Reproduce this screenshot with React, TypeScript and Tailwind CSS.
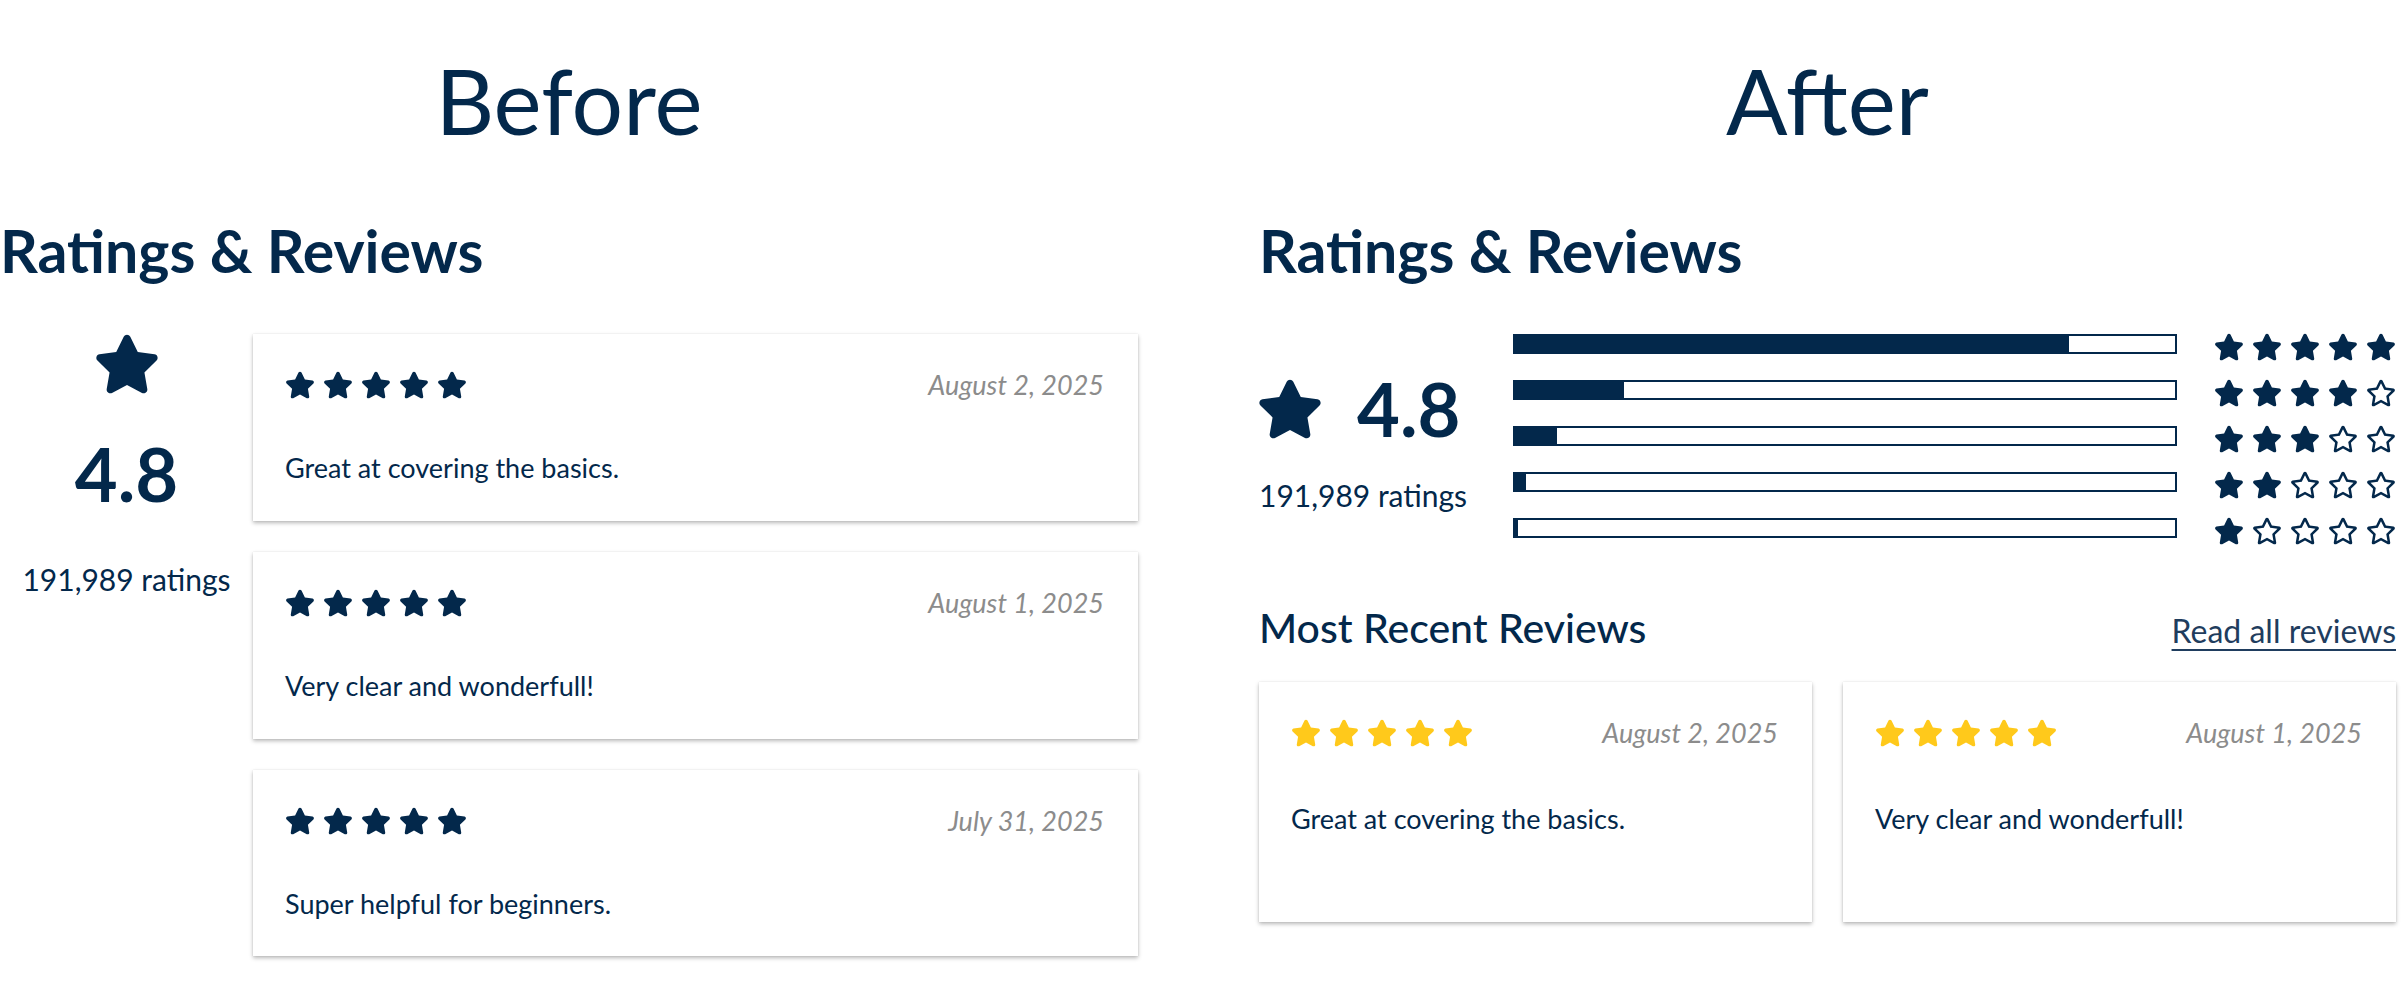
import { FaStar, FaRegStar } from 'react-icons/fa';

interface Review {
  date: string;
  text: string;
}

const beforeReviews: Review[] = [
  { date: 'August 2, 2025', text: 'Great at covering the basics.' },
  { date: 'August 1, 2025', text: 'Very clear and wonderfull!' },
  { date: 'July 31, 2025', text: 'Super helpful for beginners.' },
];

// share of ratings per star level, 5 down to 1
const distribution = [0.84, 0.165, 0.064, 0.016, 0.004];

function StarRow({ filled, className }: { filled: number; className: string }) {
  return (
    <div className={`flex gap-[8px] ${className}`}>
      {[0, 1, 2, 3, 4].map((i) =>
        i < filled ? <FaStar key={i} size={30} /> : <FaRegStar key={i} size={30} />
      )}
    </div>
  );
}

function BeforeCard({ review }: { review: Review }) {
  return (
    <div className="bg-white pt-[35px] pb-[36px] pl-[32px] pr-[34px] shadow-[0_2px_4px_rgba(0,0,0,0.28),0_0_1px_rgba(0,0,0,0.12)]">
      <div className="flex items-center justify-between">
        <StarRow filled={5} className="text-[#03284b]" />
        <span className="text-[27px] leading-[1.2] italic text-[#8c8c8c]">{review.date}</span>
      </div>
      <p className="mt-[51px] text-[27px] leading-[1.2] text-[#03284b]">{review.text}</p>
    </div>
  );
}

function AfterCard({ review }: { review: Review }) {
  return (
    <div className="h-[240px] flex-1 bg-white pt-[35px] pl-[32px] pr-[34px] shadow-[0_2px_4px_rgba(0,0,0,0.28),0_0_1px_rgba(0,0,0,0.12)]">
      <div className="flex items-center justify-between">
        <StarRow filled={5} className="text-[#ffc91b]" />
        <span className="text-[27px] leading-[1.2] italic text-[#8c8c8c]">{review.date}</span>
      </div>
      <p className="mt-[53px] text-[27px] leading-[1.2] text-[#03284b]">{review.text}</p>
    </div>
  );
}

export default function App() {
  return (
    <div className="flex w-[2408px] bg-white pb-[30px] font-['Lato','Liberation_Sans',sans-serif] text-[#03284b]">
      {/* Before */}
      <div className="w-[1138px]">
        <h1 className="mt-[45px] text-center text-[91px] leading-[1.2] font-normal">Before</h1>
        <h2 className="mt-[62px] text-[59px] leading-[1.2] font-bold">Ratings &amp; Reviews</h2>

        <div className="mt-[47px] flex">
          <div className="flex w-[253px] flex-col items-center">
            <FaStar size={66} className="-mt-[3px]" />
            <div className="mt-[33px] text-[74px] leading-[1.2] font-bold">4.8</div>
            <div className="mt-[42px] text-[30px] leading-[1.2]">191,989 ratings</div>
          </div>
          <div className="flex flex-1 flex-col gap-[31px]">
            {beforeReviews.map((r) => (
              <BeforeCard key={r.date} review={r} />
            ))}
          </div>
        </div>
      </div>

      {/* After */}
      <div className="ml-[121px] w-[1137px]">
        <h1 className="mt-[45px] text-center text-[91px] leading-[1.2] font-normal">After</h1>
        <h2 className="mt-[62px] text-[59px] leading-[1.2] font-bold">Ratings &amp; Reviews</h2>

        <div className="mt-[45px] flex items-center">
          <div className="flex w-[254px] flex-col">
            <div className="flex items-center gap-[34px]">
              <FaStar size={66} className="-ml-[2px]" />
              <span className="text-[74px] leading-[1.2] font-bold">4.8</span>
            </div>
            <div className="mt-[23px] text-[30px] leading-[1.2]">191,989 ratings</div>
          </div>

          <div className="flex flex-1 flex-col gap-[16px]">
            {distribution.map((share, i) => (
              <div key={i} className="flex items-start gap-[37px]">
                <div className="mt-[2px] h-[20px] flex-1 border-2 border-[#03284b] bg-white">
                  <div className="h-full bg-[#03284b]" style={{ width: `${share * 100}%` }} />
                </div>
                <StarRow filled={5 - i} className="text-[#03284b]" />
              </div>
            ))}
          </div>
        </div>

        <div className="mt-[57px] flex items-baseline justify-between">
          <h3 className="text-[41px] leading-[1.2] font-medium">Most Recent Reviews</h3>
          <a className="text-[32px] leading-[1.2] text-[#1f3d5e] underline decoration-2 underline-offset-[6px]">
            Read all reviews
          </a>
        </div>

        <div className="mt-[30px] flex gap-[31px]">
          <AfterCard review={beforeReviews[0]} />
          <AfterCard review={beforeReviews[1]} />
        </div>
      </div>
    </div>
  );
}
